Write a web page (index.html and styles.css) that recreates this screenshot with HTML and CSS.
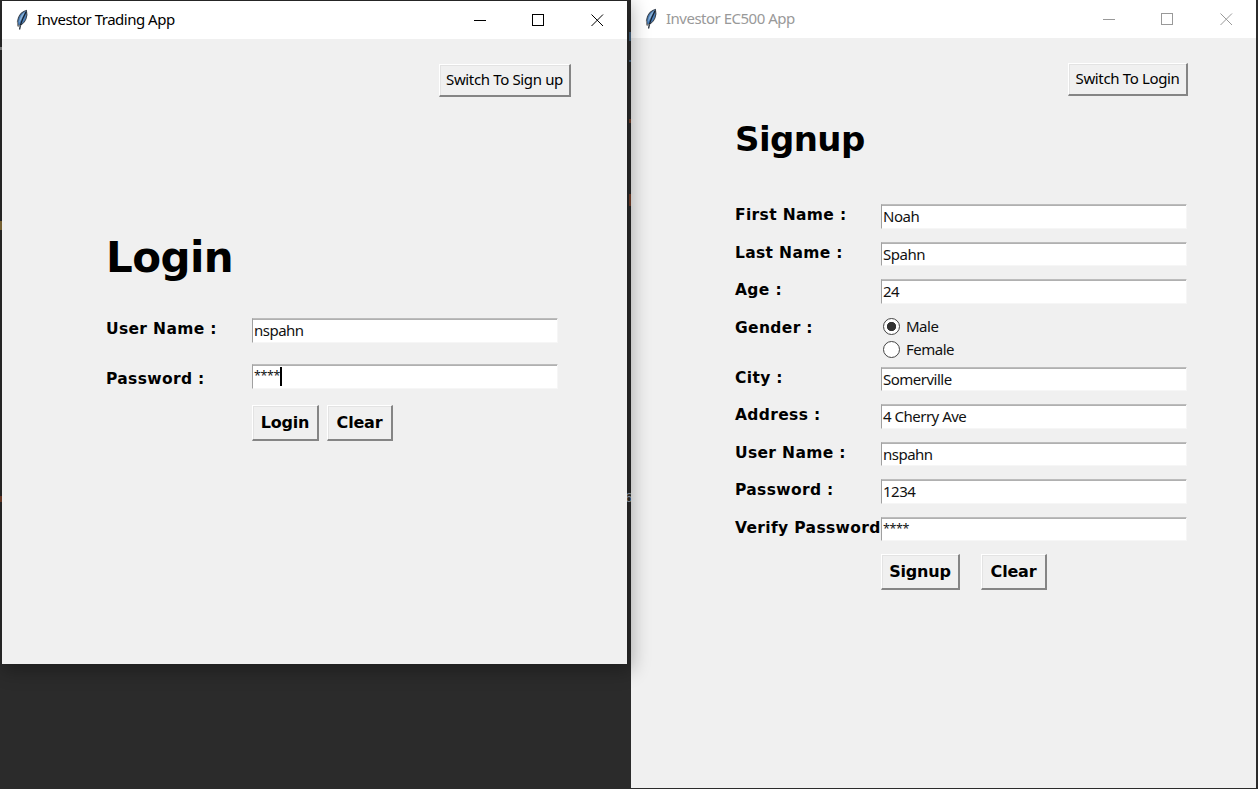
FILE: index.html
```
<!DOCTYPE html>
<html lang="en">
<head>
<meta charset="utf-8">
<title>Investor App</title>
<link rel="stylesheet" href="styles.css">
</head>
<body>
<svg width="0" height="0" class="defs">
  <symbol id="feather" viewBox="0 0 14 22">
    <path d="M11.400 1.500C8 2 4.300 5.500 3.200 9.500C2.300 12 2.200 14.500 3.200 17C8 15.500 11.300 11 11.900 6Z" fill="#4a7fba" stroke="#39434e" stroke-width="1.100"/>
    <path d="M10 3C7 4.500 4.500 9 4 14L6.500 10Z" fill="#8db4d8"/>
    <path d="M11 3C8.500 8 5.500 13 4.600 20.500" fill="none" stroke="#16202c" stroke-width="1.300"/>
    <path d="M2.300 12.500L2.800 17L5.500 16.500" fill="none" stroke="#8a8a8a" stroke-width="1"/>
  </symbol>
</svg>
<main class="desktop">
  <i class="mark m1"></i><i class="mark m2"></i><i class="mark m3"></i><i class="mark m4"></i><i class="mark m5"></i><i class="mark m6"></i><i class="mark m7"></i><span class="behind">6</span>
  <section class="window signup">
    <header class="titlebar">
      <svg class="logo" width="14" height="22"><use href="#feather"/></svg>
      <h2 class="title">Investor EC500 App</h2>
      <svg class="controls" width="130" height="13" viewBox="0 0 130 13" fill="none" stroke="currentColor" shape-rendering="crispEdges"><path d="M0 6.500H12M58.500 .5H69.500V11.500H58.500Z"/><path shape-rendering="auto" d="M117.500 .5L129 12M129 .5L117.500 12"/></svg>
    </header>
    <div class="switchbar"><button class="btn switch">Switch To Login</button></div>
    <h1 class="heading">Signup</h1>
    <form class="form">
      <label>First Name :</label><div class="entry">Noah</div>
      <label>Last Name :</label><div class="entry">Spahn</div>
      <label>Age :</label><div class="entry">24</div>
      <label>Gender :</label>
      <div class="radios"><div class="radio"><b class="dot on"></b><span>Male</span></div><div class="radio"><b class="dot"></b><span>Female</span></div></div>
      <label>City :</label><div class="entry">Somerville</div>
      <label>Address :</label><div class="entry">4 Cherry Ave</div>
      <label>User Name :</label><div class="entry">nspahn</div>
      <label>Password :</label><div class="entry">1234</div>
      <label>Verify Password</label><div class="entry stars">****</div>
      <div class="actions"><button class="btn bold" type="button">Signup</button><button class="btn bold" type="button">Clear</button></div>
    </form>
  </section>
  <section class="window login">
    <header class="titlebar">
      <svg class="logo" width="14" height="22"><use href="#feather"/></svg>
      <h2 class="title">Investor Trading App</h2>
      <svg class="controls" width="130" height="13" viewBox="0 0 130 13" fill="none" stroke="currentColor" shape-rendering="crispEdges"><path d="M0 6.500H12M58.500 .5H69.500V11.500H58.500Z"/><path shape-rendering="auto" d="M117.500 .5L129 12M129 .5L117.500 12"/></svg>
    </header>
    <div class="switchbar"><button class="btn switch">Switch To Sign up</button></div>
    <h1 class="heading">Login</h1>
    <form class="form">
      <label>User Name :</label><div class="entry">nspahn</div>
      <label class="low">Password :</label><div class="entry stars">****<i class="caret"></i></div>
      <div class="actions"><button class="btn bold" type="button">Login</button><button class="btn bold" type="button">Clear</button></div>
    </form>
  </section>
</main>
</body>
</html>
```
FILE: styles.css
```
* { box-sizing: border-box; }
body { margin: 0; overflow: hidden; font-family: "Noto Sans", "Open Sans", sans-serif; color: #000; }
.defs { position: absolute; }
.desktop { position: relative; width: 1258px; height: 789px; background: #2b2b2b; overflow: hidden; }
.window { position: absolute; width: 625px; background: #f0f0f0; display: flex; flex-direction: column; }
.login { left: 2px; top: 1px; height: 663px; box-shadow: 2px 4px 18px 2px rgba(0,0,0,.32); }
.signup { left: 631px; top: 0; height: 788px; }

.titlebar { display: flex; align-items: center; height: 38px; flex: none; background: #fff; padding: 0 23px 0 13px; }
.logo { flex: none; }
.title { margin: 0 auto 0 8px; padding-bottom: 2px; font-size: 15px; font-weight: 400; line-height: 20px; letter-spacing: -.5px; white-space: nowrap; }
.controls { flex: none; }
.signup .titlebar { color: #999; }

.switchbar { display: flex; justify-content: flex-end; padding: 25px 56px 0 0; height: 59px; flex: none; }
.signup .switchbar { padding-right: 68px; }
.btn { font: inherit; color: #000; background: #f0f0f0; border: solid; border-width: 1px 2px 2px 1px; border-color: #fff #858585 #858585 #fff; box-shadow: inset 1px 1px #e3e3e3; padding: 0; white-space: nowrap; }
.switch { width: 132px; height: 33px; padding-bottom: 2px; font-size: 15px; letter-spacing: -.35px; }
.signup .switch { width: 120px; }
.heading { margin: 0; font-family: "DejaVu Sans", sans-serif; font-weight: 700; }
.login .heading { margin: 135px 0 0 104px; height: 85px; font-size: 42px; line-height: 50px; letter-spacing: -.6px; }
.signup .heading { margin: 22px 0 0 104px; height: 85px; font-size: 34px; line-height: 40px; letter-spacing: -.6px; }

.form { display: grid; grid-template-columns: 146px 305.500px; margin: 0; align-content: start; }
.login .form { margin-left: 104px; grid-template-rows: 46px 41px 36px; }
.signup .form { margin-left: 104px; grid-template-rows: repeat(3, 37.5px) 50px repeat(5, 37.5px) 36px; }
label { font: 700 15.500px/22px "DejaVu Sans", sans-serif; letter-spacing: .35px; white-space: nowrap; }
.low { padding-top: 4px; }
.entry { height: 24.500px; padding: 1px 0 0 1px; background: #fff; border: 1px solid; border-color: #bcbcbc #f6f6f6 #f6f6f6 #a0a0a0; box-shadow: inset 0 1px #b0b0b0; font-size: 15px; line-height: 21px; letter-spacing: -.5px; white-space: nowrap; color: #111; }
.stars { font-size: 12.500px; letter-spacing: -.35px; line-height: 20px; }
.caret { display: inline-block; width: 2px; height: 19px; margin-top: 1px; background: #000; vertical-align: top; }
.radios { padding: 0 0 0 2px; margin-top: -1px; }
.radio { display: flex; align-items: center; gap: 6px; height: 22.500px; font-size: 15px; letter-spacing: -.5px; color: #111; }
.radio span { padding-bottom: 1px; }
.dot { width: 17px; height: 17px; border: 1.500px solid #444; border-radius: 50%; background: #fff; }
.dot.on { background: radial-gradient(circle, #333 4.300px, #fff 5px); }
.actions { grid-column: 2; display: flex; gap: 8px; }
.signup .actions { gap: 21px; }
.bold { height: 35.500px; width: 67px; font: 700 16px "DejaVu Sans", sans-serif; letter-spacing: -.2px; }
.signup .bold:first-child { width: 79px; }
.bold + .bold { width: 66px; }

/* editor text glimpsed at the window edges */
.mark { position: absolute; left: 629px; width: 2px; height: 9px; background: #45637f; }
.m1 { top: 32px; }
.m2 { top: 60px; height: 2px; }
.m3 { top: 119px; height: 4px; background: #77402b; }
.m4 { top: 194px; height: 12px; background: #77402b; }
.m5 { left: 0; top: 47px; height: 3px; width: 2px; background: #888; }
.m6 { left: 0; top: 221px; height: 9px; width: 2px; background: #8a713c; }
.m7 { left: 0; top: 496px; height: 6px; width: 2px; background: #77402b; }
.behind { position: absolute; left: 625px; top: 490px; font: 13px/16px "DejaVu Sans Mono", monospace; color: #9ba6b0; }
```
